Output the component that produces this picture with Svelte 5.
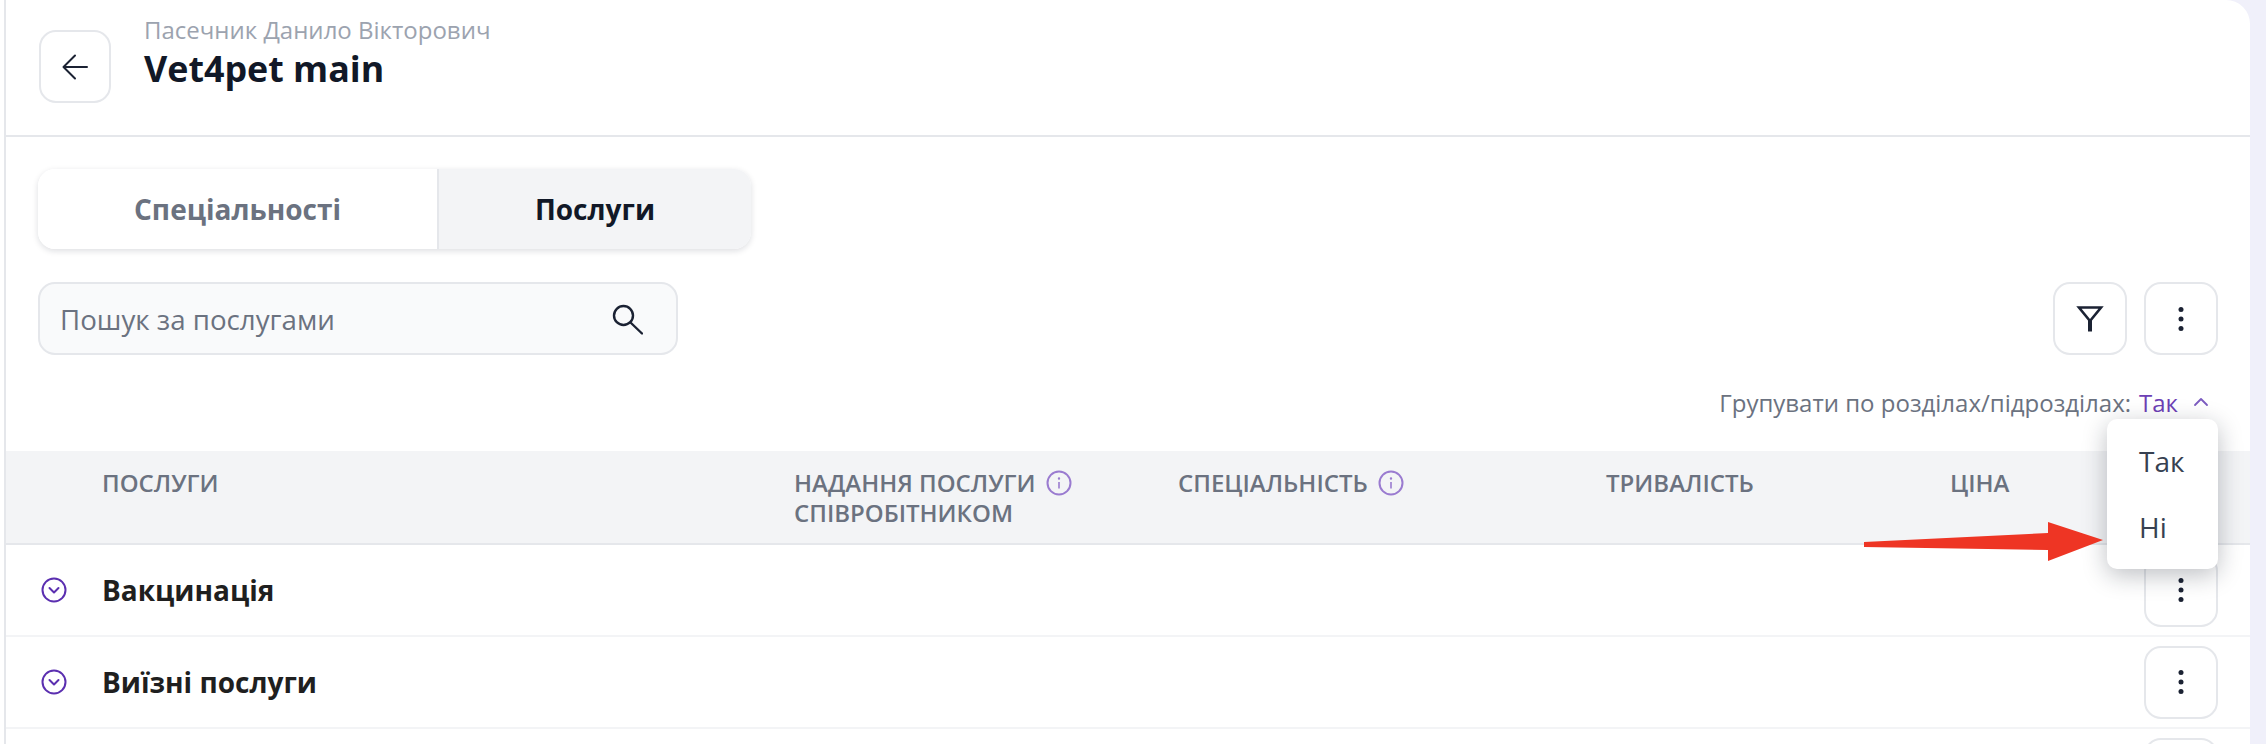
<script lang="ts">
	const columns = [
		{ label: 'Послуги', info: false },
		{ label: 'Надання послуги', second: 'співробітником', info: true },
		{ label: 'Спеціальність', info: true },
		{ label: 'Тривалість', info: false },
		{ label: 'Ціна', info: false }
	];

	const groups = ['Вакцинація', 'Виїзні послуги', ''];
</script>

{#snippet dots()}
	<svg width="6" height="26" viewBox="0 0 6 26" fill="#1b2233">
		<circle cx="3" cy="3.5" r="2.5" />
		<circle cx="3" cy="13" r="2.5" />
		<circle cx="3" cy="22.5" r="2.5" />
	</svg>
{/snippet}

<div class="page">
	<main class="panel">
		<header class="top">
			<button class="icon-btn back" aria-label="Назад">
				<svg width="28" height="28" viewBox="0 0 28 28" fill="none" stroke="#1b2233" stroke-width="2" stroke-linecap="round" stroke-linejoin="round">
					<path d="M26 14H3M14 2.5 2.5 14 14 25.5" />
				</svg>
			</button>
			<div class="titles">
				<div class="owner">Пасечник Данило Вікторович</div>
				<h1>Vet4pet main</h1>
			</div>
		</header>

		<section class="content">
			<div class="tabs">
				<button class="tab">Спеціальності</button>
				<button class="tab active">Послуги</button>
			</div>

			<div class="tools">
				<label class="search">
					<input placeholder="Пошук за послугами" />
					<svg width="32" height="32" viewBox="0 0 32 32" fill="none" stroke="#1b2233" stroke-width="2.4" stroke-linecap="round">
						<circle cx="12.5" cy="12.5" r="9.5" />
						<path d="M19.5 19.5 31 30.5" />
					</svg>
				</label>
				<div class="tool-btns">
					<button class="icon-btn" aria-label="Фільтр">
						<svg width="28" height="28" viewBox="0 0 28 28" fill="none" stroke="#1b2233">
							<path d="M3 2.5h22L14 16Z" stroke-width="2.6" />
							<path d="M14 15v11.5" stroke-width="4" />
						</svg>
					</button>
					<button class="icon-btn" aria-label="Ще">{@render dots()}</button>
				</div>
			</div>

			<div class="grouping">
				<span>Групувати по розділах/підрозділах:</span>
				<span class="value">Так</span>
				<svg width="16" height="10" viewBox="0 0 16 10" fill="none" stroke="#7c5cc0" stroke-width="1.8" stroke-linecap="round" stroke-linejoin="round">
					<path d="M2 8l6-6 6 6" />
				</svg>
			</div>
		</section>

		<div class="thead">
			{#each columns as col}
				<div class="th">
					<div class="th-line">
						{col.label}
						{#if col.info}
							<svg class="info" width="26" height="26" viewBox="0 0 26 26" fill="none" stroke="#9a7bd0" stroke-width="2">
								<circle cx="13" cy="13" r="11.5" />
								<path d="M13 12v6.5" stroke-width="1.6" />
								<circle cx="13" cy="8.5" r="0.6" stroke-width="1.2" />
							</svg>
						{/if}
					</div>
					{#if col.second}<div>{col.second}</div>{/if}
				</div>
			{/each}
		</div>

		{#each groups as group}
			<div class="row">
				<svg class="toggle" width="26" height="26" viewBox="0 0 26 26" fill="none" stroke="#5b2fb0" stroke-width="2" stroke-linecap="round" stroke-linejoin="round">
					<circle cx="13" cy="13" r="11.5" />
					<path d="M8.5 11 13 15.5 17.5 11" />
				</svg>
				<strong>{group}</strong>
				<button class="icon-btn" aria-label="Ще">{@render dots()}</button>
			</div>
		{/each}

		<div class="menu">
			<div class="menu-item">Так</div>
			<div class="menu-item">Ні</div>
		</div>

		<svg class="pointer" width="240" height="40" viewBox="0 0 240 40">
			<path d="M0 20 184 11V0L239 18 184 39V28L0 25Z" fill="#ee3524" />
		</svg>
	</main>
</div>

<style>
	:global(body) {
		background: #f0f0fa;
	}

	.page {
		height: 744px;
		overflow: hidden;
		padding-left: 4px;
		background: linear-gradient(to right, #fff 4px, #f0f0fa 4px);
		font-family: 'Open Sans', 'Noto Sans', sans-serif;
	}

	.panel {
		position: relative;
		width: 2246px;
		min-height: 744px;
		box-sizing: border-box;
		background: #fff;
		border-left: 2px solid #e5e7eb;
		border-top-right-radius: 24px;
	}

	button {
		font-family: inherit;
		cursor: pointer;
	}

	.icon-btn {
		display: flex;
		align-items: center;
		justify-content: center;
		flex-shrink: 0;
		width: 74px;
		height: 73px;
		padding: 0;
		background: #fff;
		border: 2px solid #e5e7eb;
		border-radius: 17px;
	}

	.top {
		display: flex;
		gap: 33px;
		height: 120px;
		padding: 15px 0 0 33px;
		border-bottom: 2px solid #e5e7eb;
	}

	.back {
		width: 72px;
		margin-top: 15px;
	}

	.owner {
		font-size: 24px;
		line-height: 30px;
		color: #9ca3af;
	}

	h1 {
		margin: 1px 0 0;
		font-size: 35.8px;
		line-height: 44px;
		font-weight: 700;
		color: #111827;
	}

	.content {
		padding: 32px 32px 0 32px;
	}

	.tabs {
		display: flex;
		width: 713px;
		height: 80px;
		border-radius: 17px;
		box-shadow: 0 2px 6px rgba(17, 24, 39, 0.14);
		overflow: hidden;
	}

	.tab {
		width: 399px;
		border: 0;
		background: #fff;
		font-size: 28px;
		font-weight: 700;
		color: #6b7280;
	}

	.tab.active {
		width: 314px;
		background: #f3f4f6;
		border-left: 2px solid #e5e7eb;
		color: #111827;
	}

	.tools {
		display: flex;
		justify-content: space-between;
		margin-top: 33px;
	}

	.search {
		display: flex;
		align-items: center;
		width: 640px;
		height: 73px;
		box-sizing: border-box;
		padding: 0 33px 0 20px;
		background: #f9fafb;
		border: 2px solid #e5e7eb;
		border-radius: 17px;
	}

	.search input {
		flex: 1;
		min-width: 0;
		border: 0;
		outline: 0;
		padding: 0;
		background: transparent;
		font-family: inherit;
		font-size: 27.7px;
		color: #6b7280;
	}

	.search input::placeholder {
		color: #6b7280;
		opacity: 1;
	}

	.tool-btns {
		display: flex;
		gap: 17px;
	}

	.grouping {
		display: flex;
		align-items: center;
		justify-content: flex-end;
		gap: 8px;
		height: 34px;
		margin-top: 30px;
		padding-right: 9px;
		font-size: 24px;
		color: #6b7280;
	}

	.grouping .value {
		color: #6d3fb5;
		margin-right: 7px;
	}

	.thead {
		display: grid;
		grid-template-columns: 692px 384px 428px 344px 1fr;
		height: 92px;
		margin-top: 32px;
		padding-left: 96px;
		background: #f3f4f6;
		border-bottom: 2px solid #e5e7eb;
	}

	.th {
		padding-top: 17px;
		font-size: 24px;
		line-height: 30px;
		font-weight: 600;
		text-transform: uppercase;
		color: #6b7280;
	}

	.th-line {
		display: flex;
		align-items: center;
		gap: 10px;
	}

	.row {
		display: flex;
		align-items: center;
		height: 90px;
		padding: 0 32px 0 35px;
		border-bottom: 2px solid #f3f4f6;
	}

	.toggle {
		flex-shrink: 0;
		margin-right: 35px;
	}

	.row strong {
		flex: 1;
		font-size: 28px;
		font-weight: 700;
		color: #1f1f1f;
	}

	.menu {
		position: absolute;
		top: 419px;
		right: 32px;
		display: flex;
		flex-direction: column;
		justify-content: center;
		width: 111px;
		height: 150px;
		box-sizing: border-box;
		padding-left: 32px;
		background: #fff;
		border-radius: 10px;
		box-shadow: 0 6px 24px rgba(17, 24, 39, 0.28);
	}

	.menu-item {
		height: 66px;
		line-height: 66px;
		font-size: 28px;
		color: #374151;
	}

	.pointer {
		position: absolute;
		top: 522px;
		left: 1858px;
	}
</style>
